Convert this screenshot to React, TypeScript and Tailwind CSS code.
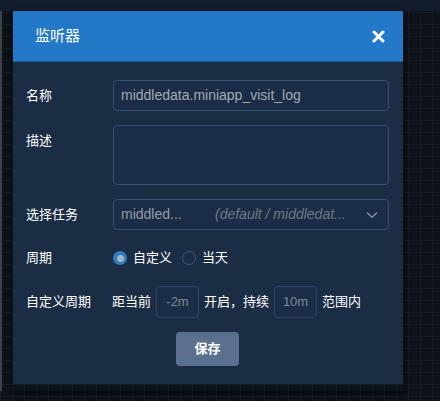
import { useState } from "react";

const font = "font-['Liberation_Sans','Noto_Sans_CJK_SC',sans-serif]";

const Row = ({ label, children }: { label: string; children: React.ReactNode }) => (
  <div className="flex items-start">
    <div className="w-[87px] h-[31px] flex items-center text-[13px] text-white shrink-0">{label}</div>
    <div className="flex-1 min-w-0">{children}</div>
  </div>
);

const App = () => {
  const [period, setPeriod] = useState<"custom" | "today">("custom");

  return (
    <div className={`${font} w-[440px] h-[401px] bg-[#0d1118] bg-[linear-gradient(#151b24_1px,transparent_1px),linear-gradient(90deg,#151b24_1px,transparent_1px)] bg-[size:12px_12px] flex flex-col overflow-hidden`}>
      <div className="h-[11px] bg-[#131c2b] shrink-0" />
      <div className="flex">
        <div className="w-[2px] h-[380px] bg-[#3c4148]" />
        <div className="ml-[11px] w-[390px] flex flex-col shadow-[0_2px_6px_rgba(0,0,0,0.6)]">
          {/* header */}
          <div className="h-[51px] bg-[#2478c8] border-b border-[#1c5a94] flex items-center justify-between pl-[22px] pr-[18px]">
            <span className="text-[15px] text-white">监听器</span>
            <svg width="13" height="13" viewBox="0 0 13 13">
              <path d="M2 2 L11 11 M11 2 L2 11" stroke="#fff" strokeWidth="3" strokeLinecap="round" />
            </svg>
          </div>

          {/* body */}
          <div className="bg-[#1b2d45] pl-[13px] pr-[14px] pt-[18px] pb-[18px] flex flex-col gap-[14px]">
            <Row label="名称">
              <div className="h-[31px] rounded-[4px] border border-[#34506f] bg-[#1a2c46] flex items-center px-[7px] text-[14px] text-[#a2aab4]">
                middledata.miniapp_visit_log
              </div>
            </Row>
            <Row label="描述">
              <div className="h-[60px] rounded-[4px] border border-[#34506f] bg-[#1a2c46]" />
            </Row>
            <Row label="选择任务">
              <div className="h-[31px] rounded-[4px] border border-[#34506f] bg-[#1a2c46] flex items-center pl-[7px] pr-[10px] text-[14px] text-[#949da8]">
                <span className="w-[94px] shrink-0">middled...</span>
                <span className="italic flex-1 truncate text-[#6f7a88]">(default / middledat...</span>
                <svg width="12" height="8" viewBox="0 0 12 8" className="ml-2">
                  <path d="M1 1.5 L6 6.5 L11 1.5" stroke="#8b95a2" strokeWidth="1.2" fill="none" />
                </svg>
              </div>
            </Row>
            <div className="flex items-center h-[28px]">
              <div className="w-[87px] text-[13px] text-white shrink-0">周期</div>
              <button onClick={() => setPeriod("custom")} className="flex items-center gap-[6px] text-[13px] text-white">
                <span className={`w-[14px] h-[14px] rounded-full flex items-center justify-center ${period === "custom" ? "bg-[#2f7bc4]" : "border border-[#3a5878]"}`}>
                  {period === "custom" && <span className="w-[7px] h-[7px] rounded-full bg-[#a9b3c0]" />}
                </span>
                自定义
              </button>
              <button onClick={() => setPeriod("today")} className="ml-[10px] flex items-center gap-[6px] text-[13px] text-white">
                <span className={`w-[14px] h-[14px] rounded-full flex items-center justify-center ${period === "today" ? "bg-[#2f7bc4]" : "border border-[#3a5878]"}`}>
                  {period === "today" && <span className="w-[7px] h-[7px] rounded-full bg-[#a9b3c0]" />}
                </span>
                当天
              </button>
            </div>
            <div className="flex items-center text-[13px] text-white">
              <div className="w-[86px] shrink-0">自定义周期</div>
              <span>距当前</span>
              <div className="mx-[5px] w-[43px] h-[32px] rounded-[4px] border border-[#2c4766] bg-[#1a2c46] flex items-center justify-center text-[13px] text-[#7f8b99]">-2m</div>
              <span>开启，持续</span>
              <div className="mx-[5px] w-[43px] h-[32px] rounded-[4px] border border-[#2c4766] bg-[#1a2c46] flex items-center justify-center text-[13px] text-[#7f8b99]">10m</div>
              <span>范围内</span>
            </div>
            <div className="flex justify-center">
              <button className="w-[63px] h-[34px] rounded-[4px] bg-[#5b6f8e] text-white text-[13px] font-bold">保存</button>
            </div>
          </div>
        </div>
      </div>
    </div>
  );
};

export default App;
